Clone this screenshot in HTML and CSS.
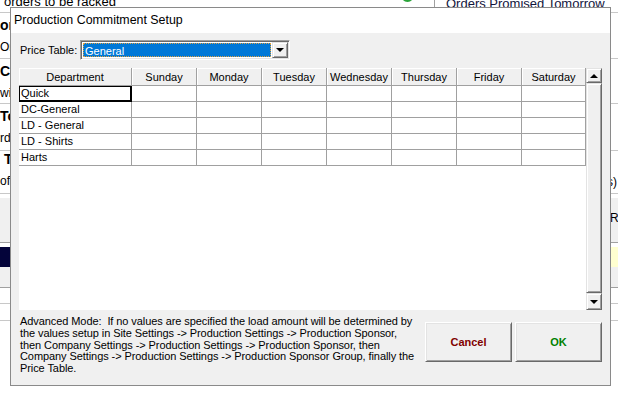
FILE: index.html
```html
<!DOCTYPE html>
<html>
<head>
<meta charset="utf-8">
<title>Production Commitment Setup</title>
<link rel="stylesheet" href="styles.css">
</head>
<body>
<div class="app">
  <div class="row r-top">
    <div class="pane-l"><span class="note">orders to be racked</span><span class="dot"></span></div>
    <div class="pane-r"><span class="link">Orders Promised Tomorrow</span></div>
  </div>
  <div class="row sec s1">
    <div class="pane-l"><div class="hd">or</div><div class="sub">Orc</div></div>
    <div class="pane-r"></div>
  </div>
  <div class="row sec s2">
    <div class="pane-l"><div class="hd">Ch</div><div class="sub">wi</div></div>
    <div class="pane-r"></div>
  </div>
  <div class="row sec s3">
    <div class="pane-l"><div class="hd">To</div><div class="sub">rd</div></div>
    <div class="pane-r"></div>
  </div>
  <div class="row sec s4">
    <div class="pane-l"><div class="hd ind">T</div><div class="sub">of</div></div>
    <div class="pane-r"><div class="sub right">s)</div></div>
  </div>
  <div class="row tools">
    <div class="pane-l"></div>
    <div class="pane-r"><span class="tool-label">Refresh</span></div>
  </div>
  <div class="row band">
    <div class="pane-l"><div class="band-l"></div></div>
    <div class="pane-r"><div class="band-r"></div></div>
  </div>
  <div class="row gray2"><div class="pane-l"></div><div class="pane-r"></div></div>
  <div class="row blank1"><div class="pane-l"></div><div class="pane-r"></div></div>
  <div class="row blank2"><div class="pane-l"></div><div class="pane-r"></div></div>
</div>

<div class="dialog">
  <div class="title">Production Commitment Setup</div>
  <div class="body">
    <div class="price-row">
      <span class="label">Price Table:</span>
      <div class="combo">
        <div class="combo-val"><span class="sel">General</span></div>
        <div class="combo-btn"><span class="arrow-down"></span></div>
      </div>
    </div>
    <div class="grid-wrap">
      <div class="grid">
        <div class="hcell">Department</div>
        <div class="hcell">Sunday</div>
        <div class="hcell">Monday</div>
        <div class="hcell">Tuesday</div>
        <div class="hcell">Wednesday</div>
        <div class="hcell">Thursday</div>
        <div class="hcell">Friday</div>
        <div class="hcell">Saturday</div>

        <div class="cell dept focus">Quick</div>
        <div class="cell"></div><div class="cell"></div><div class="cell"></div><div class="cell"></div><div class="cell"></div><div class="cell"></div><div class="cell"></div>

        <div class="cell dept">DC-General</div>
        <div class="cell"></div><div class="cell"></div><div class="cell"></div><div class="cell"></div><div class="cell"></div><div class="cell"></div><div class="cell"></div>

        <div class="cell dept">LD - General</div>
        <div class="cell"></div><div class="cell"></div><div class="cell"></div><div class="cell"></div><div class="cell"></div><div class="cell"></div><div class="cell"></div>

        <div class="cell dept">LD - Shirts</div>
        <div class="cell"></div><div class="cell"></div><div class="cell"></div><div class="cell"></div><div class="cell"></div><div class="cell"></div><div class="cell"></div>

        <div class="cell dept">Harts</div>
        <div class="cell"></div><div class="cell"></div><div class="cell"></div><div class="cell"></div><div class="cell"></div><div class="cell"></div><div class="cell"></div>
      </div>
      <div class="vscroll">
        <div class="sbtn up"><span class="arrow-up"></span></div>
        <div class="thumb"></div>
        <div class="sbtn down"><span class="arrow-down"></span></div>
      </div>
    </div>
    <div class="footer">
      <p class="help">Advanced Mode:&nbsp; If no values are specified the load amount will be determined by<br>the values setup in Site Settings -&gt; Production Settings -&gt; Production Sponsor,<br>then Company Settings -&gt; Production Settings -&gt; Production Sponsor, then<br>Company Settings -&gt; Production Settings -&gt; Production Sponsor Group, finally the<br>Price Table.</p>
      <div class="buttons">
        <div class="btn cancel">Cancel</div>
        <div class="btn ok">OK</div>
      </div>
    </div>
  </div>
</div>
</body>
</html>
```

FILE: styles.css
```css
html, body {
  margin: 0;
  padding: 0;
}
body {
  width: 618px;
  height: 394px;
  overflow: hidden;
  position: relative;
  background: #ffffff;
  font-family: "Liberation Sans", Arial, sans-serif;
  color: #000;
}

/* ---------- background application ---------- */
.app {
  display: flex;
  flex-direction: column;
}
.row {
  display: flex;
  border-bottom: 1px solid #c8c8c8;
}
.pane-l {
  width: 434px;
  border-right: 1px solid #c8c8c8;
  overflow: hidden;
  white-space: nowrap;
  position: relative;
}
.pane-r {
  flex: 1;
  overflow: hidden;
  white-space: nowrap;
}
.r-top {
  height: 12px;
}
.r-top .pane-l {
  border-right-color: #a0a0a0;
}
.note {
  display: block;
  font-size: 13px;
  line-height: 14px;
  margin-top: -5px;
  padding-left: 4px;
  color: #000;
}
.dot {
  position: absolute;
  left: 401px;
  top: -11px;
  width: 13px;
  height: 13px;
  border-radius: 50%;
  background: #2aa43a;
}
.link {
  display: block;
  font-size: 13px;
  line-height: 14px;
  margin-top: -3px;
  padding-left: 11px;
  color: #10143c;
}
.sec .pane-l {
  padding-top: 4px;
}
.s1 { height: 45px; }
.s2 { height: 44px; }
.s3 { height: 46px; }
.s4 { height: 42px; }
.s4 .pane-l { padding-top: 0; }
.hd {
  font-weight: bold;
  font-size: 14px;
  line-height: 16px;
}
.hd.ind {
  padding-left: 4px;
}
.sub {
  font-size: 12px;
  line-height: 14px;
  margin-top: 7px;
}
.s4 .pane-r .sub {
  margin-top: 24px;
}
.right {
  text-align: right;
  padding-right: 1px;
}
.tools {
  height: 44px;
  background: #f0f0f0;
  border-top: 4px solid #fff;
  border-bottom-color: #a0a0a0;
}
.tools .pane-l, .tools .pane-r, .gray2 .pane-l, .gray2 .pane-r, .band .pane-l, .band .pane-r {
  border-right: none;
}
.tool-label {
  display: block;
  padding-left: 176px;
  font-size: 12px;
  line-height: 14px;
  margin-top: 13px;
}
.band {
  height: 24px;
  border-bottom: none;
}
.band-l {
  margin-top: 4px;
  height: 20px;
  background: #04043a;
}
.band-r {
  margin-top: 4px;
  height: 20px;
  background: #ffffd0;
}
.gray2 {
  height: 20px;
  background: #f0f0f0;
  border-bottom-color: #a0a0a0;
}
.blank1 { height: 15px; }
.blank2 { height: 16px; }
.blank1 .pane-l, .blank2 .pane-l { border-right: none; }

/* ---------- dialog ---------- */
.dialog {
  position: absolute;
  left: 10px;
  top: 7px;
  width: 601px;
  height: 379px;
  box-sizing: border-box;
  border: 1px solid #8a8a8a;
  background: #f0f0f0;
  display: flex;
  flex-direction: column;
  font-size: 11px;
}
.title {
  height: 25px;
  background: #fff;
  padding-left: 3px;
  font-size: 12.4px;
  line-height: 25px;
  color: #000;
}
.body {
  flex: 1;
  padding: 7px 8px 0 8px;
  display: flex;
  flex-direction: column;
}
.price-row {
  display: flex;
  align-items: center;
  height: 20px;
}
.label {
  width: 61px;
  padding-left: 1px;
  box-sizing: border-box;
}
.combo {
  width: 210px;
  height: 20px;
  box-sizing: border-box;
  border-top: 1px solid #a0a0a0;
  border-left: 1px solid #a0a0a0;
  border-right: 1px solid #fff;
  border-bottom: 1px solid #fff;
  box-shadow: inset 1px 1px 0 #696969, inset -1px -1px 0 #e3e3e3;
  background: #fff;
  display: flex;
  padding: 2px 1px 2px 2px;
}
.combo-val {
  flex: 1;
  display: flex;
}
.sel {
  flex: 1;
  background: #0078d7;
  color: #fff;
  line-height: 14px;
  padding-left: 1px;
  border: 1px dotted #e0a040;
  margin-right: 1px;
}
.combo-btn {
  width: 16px;
  box-sizing: border-box;
  background: #f0f0f0;
  border-top: 1px solid #e3e3e3;
  border-left: 1px solid #e3e3e3;
  border-right: 1px solid #696969;
  border-bottom: 1px solid #696969;
  box-shadow: inset 1px 1px 0 #fff, inset -1px -1px 0 #a0a0a0;
  display: flex;
  align-items: center;
  justify-content: center;
  margin-top: -1px;
  margin-bottom: -1px;
}
.arrow-down {
  width: 0;
  height: 0;
  border-left: 4px solid transparent;
  border-right: 4px solid transparent;
  border-top: 4px solid #000;
}
.arrow-up {
  width: 0;
  height: 0;
  border-left: 4px solid transparent;
  border-right: 4px solid transparent;
  border-bottom: 4px solid #000;
}

.grid-wrap {
  margin-top: 8px;
  height: 242px;
  display: flex;
}
.grid {
  flex: 1;
  background: #fff;
  display: grid;
  grid-template-columns: 113px 65px 65px 65px 65px 65px 65px 64px;
  grid-template-rows: 18px repeat(5, 16px);
  align-content: start;
}
.hcell {
  background: #f0f0f0;
  border-right: 1px solid #a0a0a0;
  border-bottom: 1px solid #a0a0a0;
  box-shadow: inset 1px 1px 0 #fff;
  text-align: center;
  padding-top: 1px;
  line-height: 16px;
  font-size: 11px;
}
.cell {
  border-right: 1px solid #a0a0a0;
  border-bottom: 1px solid #a0a0a0;
  line-height: 15px;
  padding-left: 2px;
  font-size: 11px;
  white-space: nowrap;
}
.cell.focus {
  border: 1px solid #000;
  border-right-width: 2px;
  border-bottom-width: 2px;
  padding-left: 1px;
  line-height: 13px;
}
.vscroll {
  width: 16px;
  display: flex;
  flex-direction: column;
  background: #f0f0f0;
}
.sbtn, .thumb {
  box-sizing: border-box;
  background: #f0f0f0;
  border-top: 1px solid #e3e3e3;
  border-left: 1px solid #e3e3e3;
  border-right: 1px solid #696969;
  border-bottom: 1px solid #696969;
  box-shadow: inset 1px 1px 0 #fff, inset -1px -1px 0 #a0a0a0;
  display: flex;
  align-items: center;
  justify-content: center;
}
.sbtn.up { height: 15px; }
.sbtn.down { height: 17px; }
.thumb { flex: 1; }

.footer {
  display: flex;
  justify-content: space-between;
}
.help {
  margin: 6px 0 0 1px;
  line-height: 11.8px;
  font-size: 11px;
  letter-spacing: -0.08px;
  white-space: nowrap;
}
.buttons {
  display: flex;
  gap: 3px;
  margin-top: 12px;
}
.btn {
  width: 87px;
  height: 40px;
  box-sizing: border-box;
  background: #f0f0f0;
  border-top: 1px solid #fff;
  border-left: 1px solid #fff;
  border-right: 1px solid #696969;
  border-bottom: 1px solid #696969;
  box-shadow: inset 1px 1px 0 #e3e3e3, inset -1px -1px 0 #a0a0a0;
  display: flex;
  align-items: center;
  justify-content: center;
  font-weight: bold;
  font-size: 11px;
}
.cancel { color: #800000; }
.ok { color: #008000; }
```
